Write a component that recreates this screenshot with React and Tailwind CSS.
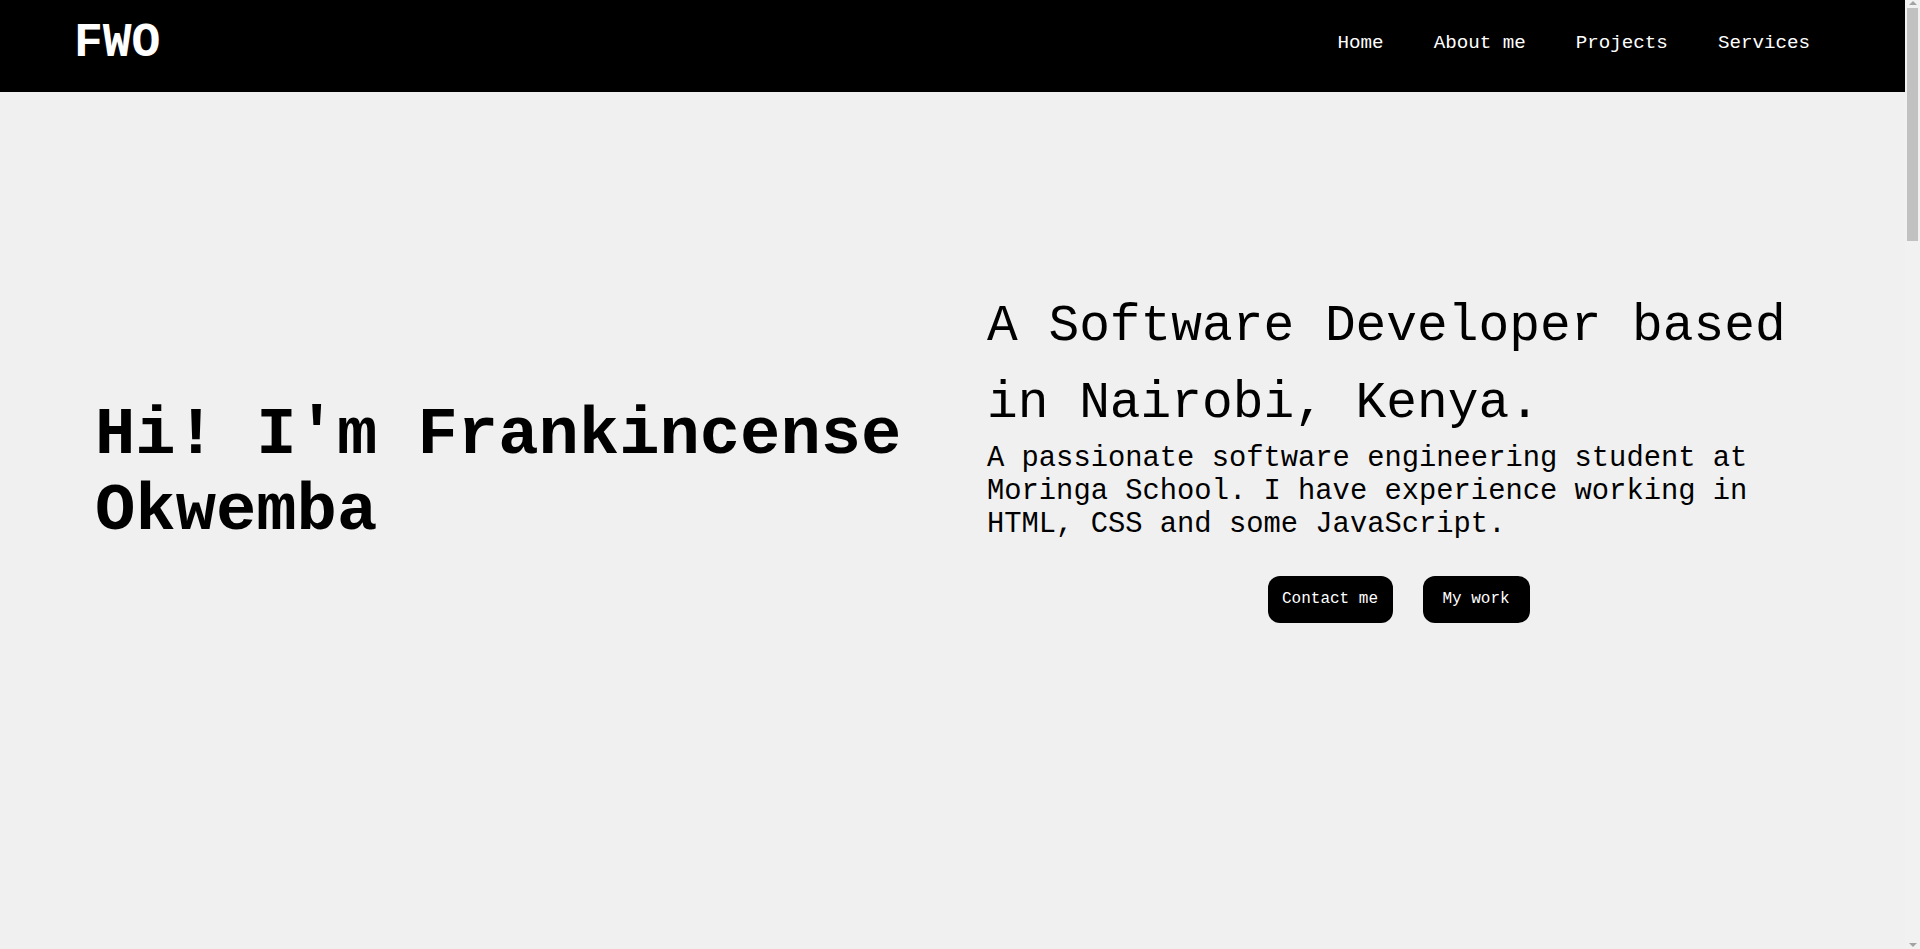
export default function App() {
  return (
    <div className="flex bg-[#f0f0f0] text-black font-['Liberation_Mono','Courier_New',monospace]">
      <div className="w-[1905px] shrink-0">
        <header className="h-[92px] bg-black flex items-center justify-between pl-[74px] pr-[95px] pb-[6px]">
          <a href="#home" className="text-[48px] font-bold text-white leading-[normal]">
            FWO
          </a>
          <nav className="flex gap-[50px] text-[19.2px] text-white leading-[normal]">
            <a href="#home">Home</a>
            <a href="#about">About me</a>
            <a href="#projects">Projects</a>
            <a href="#services">Services</a>
          </nav>
        </header>
        <main>
          <section id="home" className="h-[857px] grid grid-cols-[823px_823px] justify-between px-[95px]">
            <div className="pt-[305px]">
              <h1 className="text-[67.2px] font-bold leading-[normal]">Hi! I'm Frankincense Okwemba</h1>
            </div>
            <div className="pt-[196px]">
              <h2 className="text-[51.2px] leading-[1.5]">A Software Developer based in Nairobi, Kenya.</h2>
              <p className="text-[28.8px] leading-[normal]">
                A passionate software engineering student at Moringa School. I have experience working in HTML, CSS and some JavaScript.
              </p>
              <div className="mt-[35px] flex justify-center gap-[30px]">
                <a href="#contact" className="w-[125px] h-[47px] rounded-[12px] bg-black text-white text-[16px] flex items-center justify-center">
                  Contact me
                </a>
                <a href="#projects" className="w-[107px] h-[47px] rounded-[12px] bg-black text-white text-[16px] flex items-center justify-center">
                  My work
                </a>
              </div>
            </div>
          </section>
          <section id="about" className="h-[1955px]"></section>
          <section id="projects" className="h-[1955px]"></section>
          <section id="services" className="h-[1955px]"></section>
        </main>
      </div>
      <aside className="sticky top-0 self-start h-screen w-[15px] shrink-0 bg-[#f1f1f1] flex flex-col">
        <div className="h-[8px] flex justify-center pt-[1px]">
          <div className="w-0 h-0 border-x-[4px] border-x-transparent border-b-[4px] border-b-[#a3a3a3]"></div>
        </div>
        <div className="h-[233px] mx-[2px] bg-[#c1c1c1]"></div>
        <div className="flex-1"></div>
        <div className="h-[8px] flex justify-center pt-[2px]">
          <div className="w-0 h-0 border-x-[4px] border-x-transparent border-t-[4px] border-t-[#a3a3a3]"></div>
        </div>
      </aside>
    </div>
  );
}
